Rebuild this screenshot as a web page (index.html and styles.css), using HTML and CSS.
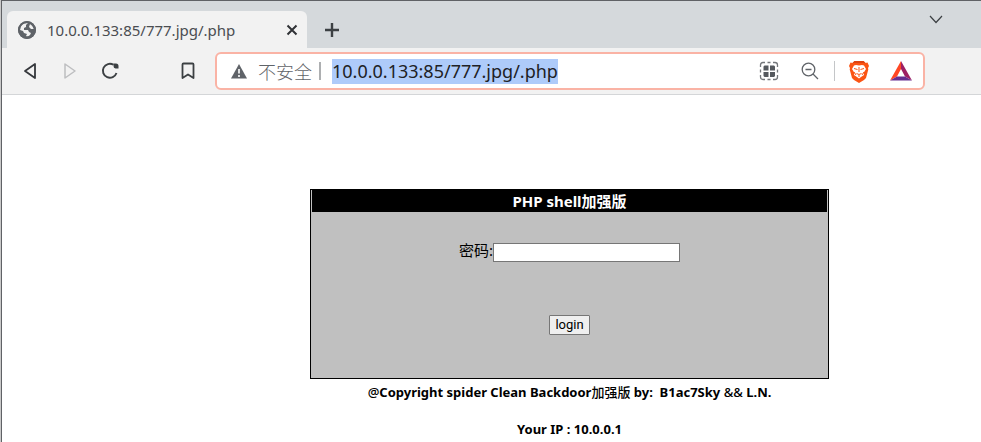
FILE: index.html
```html
<!DOCTYPE html>
<html lang="zh-CN">
<head>
<meta charset="utf-8">
<title>10.0.0.133:85/777.jpg/.php</title>
<link rel="stylesheet" href="styles.css">
</head>
<body>
<div class="window">
  <header class="tabs">
    <div class="tab">
      <svg class="globe" width="18" height="18" viewBox="0 0 18 18" aria-hidden="true"><circle cx="9" cy="9" r="9" fill="#5f6368"/><path d="M10 2 8 4 8 6 6 7 6 9 10 9 11 11 13 12 12 14Q10 16 8 15L9 13 6 12 5 10 2 9Q2 4 6 2.500ZM12 3Q15 5 16 8L13 8 11 6Z" fill="#f2f2f2"/><circle cx="9" cy="9" r="8" fill="none" stroke="#5f6368" stroke-width="2"/></svg>
      <span class="tab-title">10.0.0.133:85/777.jpg/.php</span>
      <button class="icon" aria-label="关闭"><svg width="12" height="12" viewBox="0 0 12 12"><path d="m1.500 1.500 9 9m0-9-9 9" stroke="#303236" stroke-width="2"/></svg></button>
    </div>
    <button class="icon new-tab" aria-label="新标签页"><svg width="16" height="16" viewBox="0 0 16 16"><path d="M8 1v14M1 8h14" stroke="#3c4043" stroke-width="2.400"/></svg></button>
    <button class="icon tab-list" aria-label="搜索标签页"><svg width="14" height="9" viewBox="0 0 14 9"><path d="m1 1 6 6.500L13 1" fill="none" stroke="#3c4043" stroke-width="1.200"/></svg></button>
  </header>
  <nav class="toolbar">
    <div class="nav-buttons">
      <button class="icon" aria-label="后退"><svg width="18" height="18" viewBox="0 0 18 18"><path d="M14 2v14L4 9Z" fill="none" stroke="#35383c" stroke-width="1.800" stroke-linejoin="round"/></svg></button>
      <button class="icon" aria-label="前进" disabled><svg width="18" height="18" viewBox="0 0 18 18"><path d="M4 2v14L14 9Z" fill="none" stroke="#bdbec0" stroke-width="1.500" stroke-linejoin="round"/></svg></button>
      <button class="icon" aria-label="刷新"><svg width="18" height="18" viewBox="0 0 18 18"><path d="M12.500 2.800A7 7 0 1 0 15.500 11" fill="none" stroke="#3c4043" stroke-width="1.900"/><path d="M12.500 1.500H15A2.500 2.500 0 0 1 17.500 4V6.500H14.500A2.500 2.500 0 0 1 12.500 4Z" fill="#3c4043"/></svg></button>
    </div>
    <button class="icon bookmark" aria-label="书签"><svg width="14" height="18" viewBox="0 0 14 18"><path d="M2.500 1.500h9q1 0 1 1v13.500L7 12.500 1.500 16V2.500q0-1 1-1Z" fill="none" stroke="#3c4043" stroke-width="1.800" stroke-linejoin="round"/></svg></button>
    <div class="address">
      <svg width="16" height="15" viewBox="0 0 16 15" aria-hidden="true"><path d="M8 0 16 14.500H0Z" fill="#5f6368"/><path d="M8 5v4.500M8 11v2" stroke="#fff" stroke-width="1.600"/></svg>
      <span class="insecure">不安全</span>
      <span class="url"><mark>10.0.0.133:85/777.jpg/.php</mark></span>
      <button class="icon" aria-label="二维码"><svg width="20" height="20" viewBox="0 0 20 20"><path d="M1.500 6V4q0-2.500 2.500-2.500H6m2.500 0h3m2.500 0h2q2.500 0 2.500 2.500V6m0 2.500v3m0 2.500v2q0 2.500-2.500 2.500H14m-2.500 0h-3m-2.500 0H4q-2.500 0-2.500-2.500V14m0-2.500v-3" fill="none" stroke="#74777b" stroke-width="1.300"/><path d="M5.500 4.500h4v5h-5v-4zM11 4.500h4l1 1v4h-5zM4.500 11h5v5h-4l-1-1zM11 11h5v4l-1 1h-4z" fill="#55595e"/></svg></button>
      <button class="icon" aria-label="缩小"><svg width="18" height="18" viewBox="0 0 18 18"><g fill="none" stroke="#5f6368" stroke-width="1.300"><circle cx="7.500" cy="7.500" r="6.300"/><path d="m12 12 5 5M4.500 7.500h6"/></g></svg></button>
      <span class="divider"></span>
      <button class="icon" aria-label="Brave Shields"><svg width="20" height="23" viewBox="0 0 20 23"><path d="M5.500 1h9l2 2 2-.5L20 6l-1 2 .3 1.500-2.300 8.500-2 2-5 3-5-3-2-2L.7 9.500 1 8 0 6l1.500-3.500 2 .5Z" fill="#fb5413"/><path d="M5.500 1h9l2 2H3.500Z" fill="#dd4310"/><path d="m5 5.500 2-.5 3 .5 3-.5 2 .5 2 3.500-2.500 4 .5 2-3 2L10 18.500 8 17l-3-2 .5-2L3 9Z" fill="#fff"/><path d="m5 8.500 3.500 1M15 8.500l-3.500 1M10 7v5M7.500 13.500l2.500 1 2.500-1M10 15v2M5 12l2 3M15 12l-2 3" fill="none" stroke="#fb5413" stroke-width="1"/></svg></button>
      <button class="icon" aria-label="Brave Rewards"><svg width="22" height="20" viewBox="0 0 22 20"><path d="M11 0 0 19.500 7 15.500 11 8Z" fill="#ff4724"/><path d="m11 0 11 19.500-7-4L11 8Z" fill="#9e1f63"/><path d="m0 19.500 7-4h8l7 4Z" fill="#662d91"/></svg></button>
    </div>
  </nav>
  <main class="page">
    <form class="login" onsubmit="return false">
      <h1>PHP shell加强版</h1>
      <div class="field"><label for="password">密码:</label><input id="password" type="password"></div>
      <button class="submit" type="submit">login</button>
    </form>
    <p class="note"><span class="plain">@</span>Copyright spider Clean Backdoor<span class="plain">加强版</span> by:&nbsp; B1ac7Sky <span class="plain">&amp;&amp;</span> L.N.</p>
    <p class="note">Your IP : 10.0.0.1</p>
  </main>
</div>
</body>
</html>
```
FILE: styles.css
```css
* { box-sizing: border-box; }
body {
  margin: 0;
  background: #fff;
  color: #000;
  font-family: "Noto Sans", "Noto Sans CJK SC", sans-serif;
  overflow: hidden;
}
.window {
  min-height: 100vh;
  border-top: 1px solid #606266;
  border-left: 1px solid #606266;
  margin-left: 1px;
  box-shadow: -1px 0 #c9c9c9;
}
.icon {
  display: flex;
  flex: none;
  padding: 0;
  border: 0;
  background: none;
}
.tabs {
  display: flex;
  align-items: center;
  height: 47px;
  padding: 10px 38px 0 5px;
  background: #d5d9dc;
}
.tab {
  display: flex;
  align-items: center;
  width: 300px;
  height: 37px;
  padding: 0 9px 0 11px;
  border-radius: 6px 6px 0 0;
  background: #f2f2f2;
}
.tab-title {
  flex: 1;
  margin-left: 11px;
  color: #4a4d51;
  font-size: 15px;
  line-height: 20px;
  white-space: nowrap;
}
.new-tab { margin-left: 17px; }
.tab-list {
  align-self: flex-start;
  margin: 4px 0 0 auto;
}
.toolbar {
  display: flex;
  align-items: center;
  height: 47px;
  padding: 0 56px 0 19px;
  border-bottom: 1px solid #d4d6d8;
  background: #f2f2f2;
}
.nav-buttons {
  display: flex;
  gap: 22px;
}
.bookmark { margin-left: 62px; }
.address {
  display: flex;
  flex: 1;
  align-items: center;
  height: 38px;
  margin-left: 20px;
  padding: 0 11px 0 14px;
  border: 2px solid #fab3a5;
  border-radius: 6px;
  background: #fff;
}
.insecure {
  margin-left: 11px;
  padding-right: 7px;
  border-right: 2px solid #adafb1;
  color: #5f6368;
  font-family: "Noto Sans CJK SC", sans-serif;
  font-size: 18px;
  font-weight: 300;
  line-height: 18px;
  white-space: nowrap;
}
.url {
  flex: 1;
  margin-left: 11px;
  font-size: 18px;
  line-height: 25px;
  white-space: nowrap;
}
.url mark {
  display: inline-block;
  background: #aecbfa;
  color: #202124;
}
.address .icon + .icon { margin-left: 22px; }
.divider {
  width: 1px;
  height: 20px;
  margin: 0 14px 0 15px;
  background: #c4c6c8;
}
.divider + .icon + .icon { margin-left: 21px; }
.page {
  display: flex;
  flex-direction: column;
  align-items: center;
  padding: 94px 0 0 156px;
}
.login {
  display: flex;
  flex-direction: column;
  align-items: center;
  width: 519px;
  padding: 0 1px 43px;
  border: 1px solid #000;
  background: #c0c0c0;
}
h1 {
  align-self: stretch;
  margin: 0;
  background: #000;
  color: #fff;
  font-size: 15px;
  line-height: 22px;
  text-align: center;
}
.field {
  display: flex;
  align-items: flex-end;
  height: 20px;
  margin-top: 30px;
  font-size: 15px;
  line-height: 24px;
}
.field input {
  width: 187px;
  height: 19px;
  padding: 1px 2px;
  border: 1px solid #767676;
  background: #fff;
}
.submit {
  width: 41px;
  height: 20px;
  margin-top: 53px;
  padding: 0;
  border: 1px solid #767676;
  border-radius: 1px;
  background: #efefef;
  color: #000;
  font-family: Roboto, sans-serif;
  font-size: 13px;
  line-height: 16px;
}
.note {
  margin: 4px 0 15px;
  font-size: 13px;
  font-weight: 700;
  line-height: 18px;
  white-space: nowrap;
}
.plain { font-weight: 500; }
```
